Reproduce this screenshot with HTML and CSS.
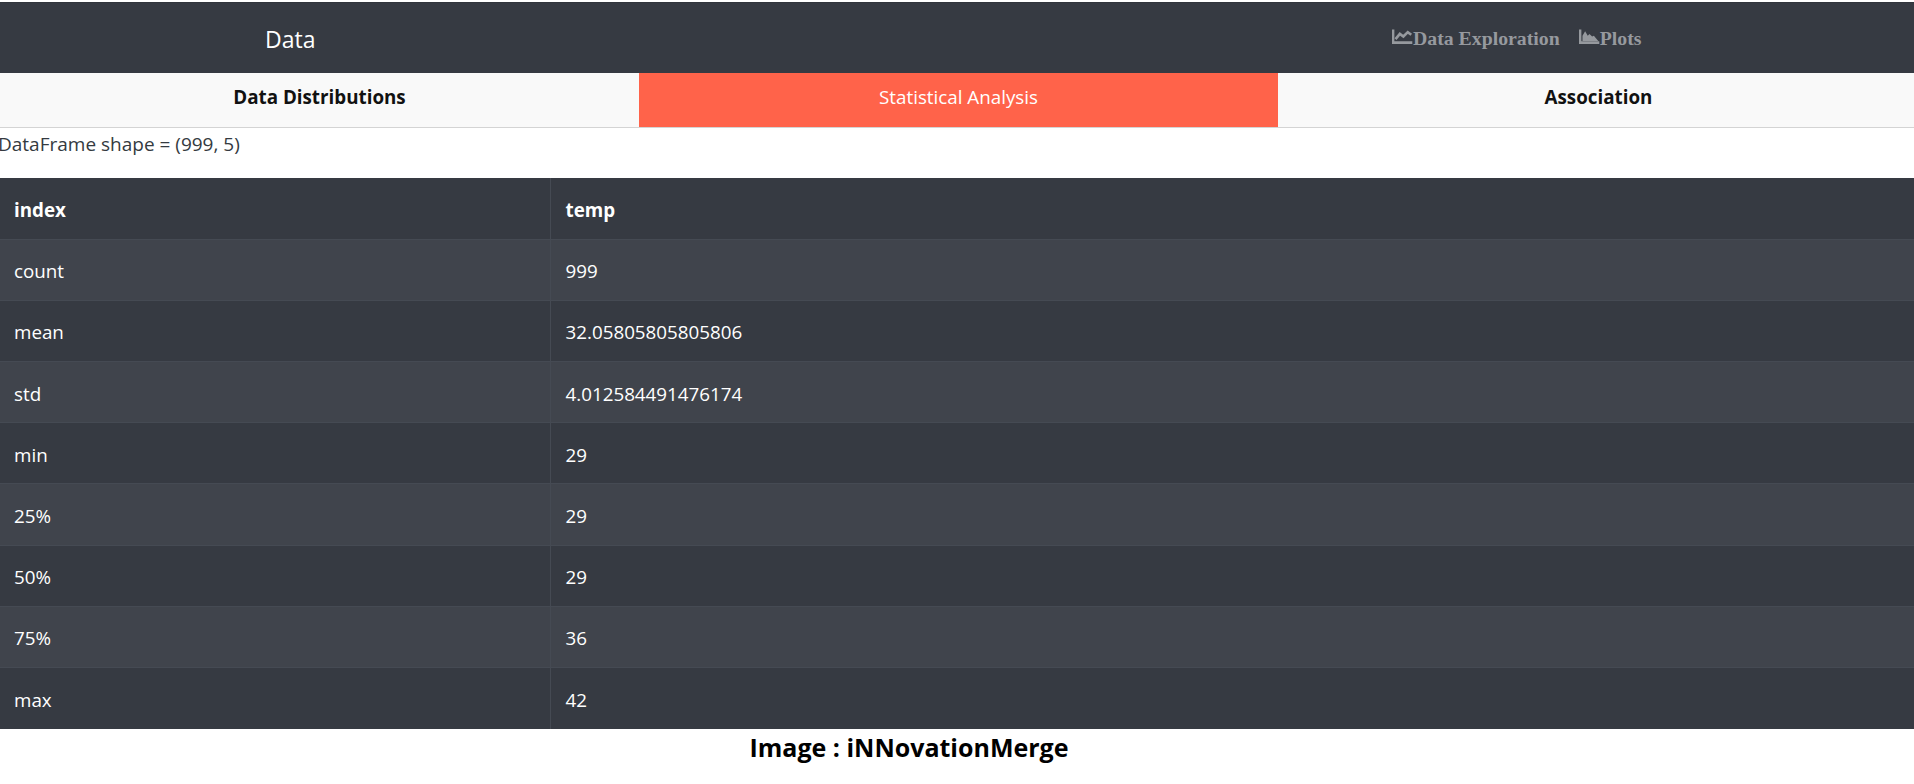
FILE: index.html
```html
<!DOCTYPE html>
<html lang="en">
<head>
<meta charset="utf-8">
<title>Data</title>
<link rel="stylesheet" href="styles.css">
</head>
<body>
<nav class="navbar">
  <div class="brand">Data</div>
  <div class="links">
    <a class="link"><svg class="icon" viewBox="0 0 24 18"><path d="M1.2 1v15h22" fill="none" stroke="currentColor" stroke-width="3"/><path d="M4 12l5-6 4 3 5-5 4 3" fill="none" stroke="currentColor" stroke-width="3"/></svg>Data Exploration</a>
    <a class="link"><svg class="icon" viewBox="0 0 24 18"><path d="M1.2 1v15h22" fill="none" stroke="currentColor" stroke-width="3"/><path d="M4 14V8l3-5 3 5 2-2 3 3 2-1 5 6z" fill="currentColor"/></svg>Plots</a>
  </div>
</nav>
<div class="tabs">
  <div class="tab">Data Distributions</div>
  <div class="tab active">Statistical Analysis</div>
  <div class="tab last">Association</div>
</div>
<p class="shape">DataFrame shape = (999, 5)</p>
<table class="stats">
  <thead><tr><th>index</th><th>temp</th></tr></thead>
  <tbody>
    <tr><td>count</td><td>999</td></tr>
    <tr><td>mean</td><td>32.05805805805806</td></tr>
    <tr><td>std</td><td>4.012584491476174</td></tr>
    <tr><td>min</td><td>29</td></tr>
    <tr><td>25%</td><td>29</td></tr>
    <tr><td>50%</td><td>29</td></tr>
    <tr><td>75%</td><td>36</td></tr>
    <tr><td>max</td><td>42</td></tr>
  </tbody>
</table>
<div class="caption">Image : iNNovationMerge</div>
</body>
</html>
```
FILE: styles.css
```css
* { box-sizing: border-box; }
html, body { margin: 0; padding: 0; background: #fff; }
body {
  height: 784px;
  overflow: hidden;
  padding-top: 2px;
  font-family: "Open Sans", "Noto Sans", sans-serif;
  font-size: 18.8px;
  color: #212529;
}
.navbar {
  height: 71px;
  background: #363a42;
  display: flex;
  align-items: center;
  border-top: 1px solid #31353c;
}
.brand {
  margin-left: 265px;
  font-size: 23px;
  color: #fff;
  width: 1127px;
  padding-top: 2px;
}
.links {
  display: flex;
  gap: 19px;
  font-family: "Liberation Serif", serif;
  font-weight: 700;
  font-size: 19.8px;
  color: #96999e;
  padding-top: 1px;
}
.link { display: flex; align-items: center; }
.icon { width: 21px; height: 17px; margin-bottom: 4px; }
.tabs {
  height: 55px;
  display: grid;
  grid-template-columns: 639px 639px 1fr;
  background: #f9f9f9;
  border-bottom: 1px solid #d4d4d4;
}
.tab {
  display: flex;
  align-items: center;
  justify-content: center;
  font-weight: 700;
  color: #111;
  padding-bottom: 7px;
}
.tab.last { padding-left: 5px; }
.tab.active {
  background: #ff634a;
  color: #fff;
  font-weight: 400;
}
.shape {
  margin: 0 0 0 -2px;
  height: 50px;
  padding-top: 3px;
  line-height: 26px;
  color: #343a40;
  font-size: 19px;
}
.stats {
  width: 100%;
  border-collapse: collapse;
  table-layout: fixed;
  color: #fff;
  background: #363a42;
}
.stats th, .stats td {
  height: 61.2px;
  padding: 3px 15px 0;
  text-align: left;
  border-top: 1px solid #454a53;
  border-left: 1px solid #454a53;
}
.stats th:first-child, .stats td:first-child { width: 550px; padding-left: 14px; border-left: 0; }
.stats thead tr th { border-top: 0; }
.stats tbody tr:nth-child(odd) { background: #40444c; }
.caption {
  text-align: center;
  font-weight: 700;
  font-size: 25px;
  color: #000;
  line-height: 34px;
  margin-top: 1px;
  padding-right: 96px;
}
```
